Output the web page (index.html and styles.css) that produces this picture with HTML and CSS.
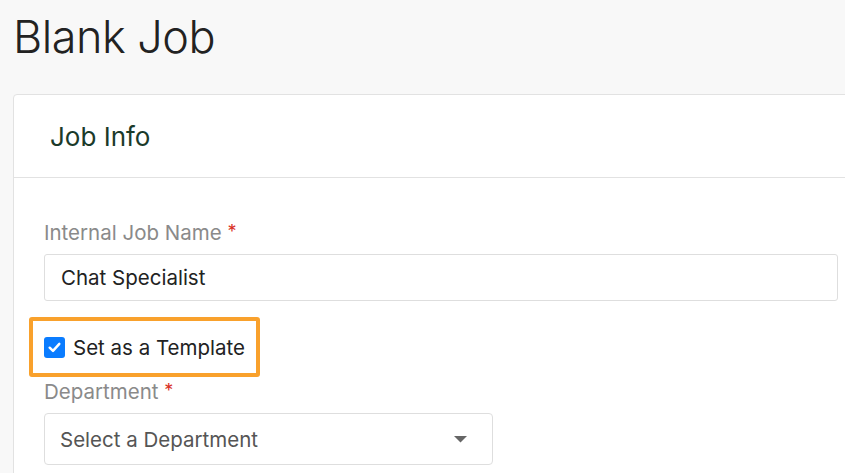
FILE: index.html
```html
<!DOCTYPE html>
<html>
<head>
<meta charset="utf-8">
<link rel="stylesheet" href="styles.css">
</head>
<body>
<div class="page">
  <h1 class="title">Blank Job</h1>
  <div class="card">
    <div class="card-header">
      <h2 class="card-title">Job Info</h2>
    </div>
    <div class="card-body">
      <div class="field">
        <label class="label">Internal Job Name <span class="req">*</span></label>
        <div class="input">Chat Specialist</div>
      </div>
      <div class="template-box">
        <span class="checkbox">
          <svg width="15" height="15" viewBox="0 0 14 14"><path d="M2.5 7.2 L5.6 10.2 L11.5 3.6" fill="none" stroke="#fff" stroke-width="2.3" stroke-linecap="round" stroke-linejoin="round"/></svg>
        </span>
        <span class="check-label">Set as a Template</span>
      </div>
      <div class="field">
        <label class="label">Department <span class="req">*</span></label>
        <div class="select">
          <span>Select a Department</span>
          <svg class="caret" width="13" height="7" viewBox="0 0 13 7"><path d="M0 0 L13 0 L6.5 6.5 Z" fill="#666"/></svg>
        </div>
      </div>
    </div>
  </div>
</div>
</body>
</html>
```
FILE: styles.css
```css
* { box-sizing: border-box; }
html, body {
  margin: 0;
  padding: 0;
  background: #f8f8f8;
  font-family: Inter, "Liberation Sans", sans-serif;
  overflow: hidden;
}
.page {
  padding: 0 0 0 13px;
  width: 900px;
}
.title {
  margin: 0;
  padding-top: 9px;
  font-size: 45px;
  font-weight: 300;
  color: #222;
  line-height: 56px;
  height: 94px;
  letter-spacing: -0.5px;
}
.card {
  background: #fff;
  border: 1px solid #e2e2e2;
  border-radius: 4px;
  width: 880px;
}
.card-header {
  height: 83px;
  border-bottom: 1px solid #e2e2e2;
  display: flex;
  align-items: center;
  padding-left: 36px;
}
.card-title {
  margin: 0;
  font-size: 26px;
  font-weight: 400;
  color: #1b3a2a;
}
.card-body {
  padding: 42px 0 40px 30px;
}
.label {
  display: block;
  height: 24px;
  font-size: 20.5px;
  color: #8a8a8a;
  line-height: 24px;
  font-weight: 400;
}
.req { color: #d93025; font-size: 18px; vertical-align: 2px; }
.input {
  margin-top: 10px;
  width: 794px;
  height: 47px;
  border: 1px solid #dedede;
  border-radius: 3px;
  display: flex;
  align-items: center;
  padding-left: 16px;
  font-size: 20.5px;
  color: #222;
}
.template-box {
  margin: 16px 0 0 -15px;
  width: 231px;
  height: 60px;
  border: 4px solid #f9a12c;
  border-radius: 3px;
  display: flex;
  align-items: center;
  padding-left: 11px;
}
.checkbox {
  width: 21px;
  height: 21px;
  background: #0a7cff;
  border-radius: 3px;
  display: flex;
  align-items: center;
  justify-content: center;
}
.check-label {
  margin-left: 8px;
  font-size: 20.5px;
  color: #222;
}
.template-box + .field { margin-top: 2px; }
.select {
  margin-top: 10px;
  width: 449px;
  height: 52px;
  border: 1px solid #dedede;
  border-radius: 4px;
  display: flex;
  align-items: center;
  justify-content: space-between;
  padding: 0 25px 0 15px;
  font-size: 20.5px;
  color: #555;
}
.caret { display: block; }
```
